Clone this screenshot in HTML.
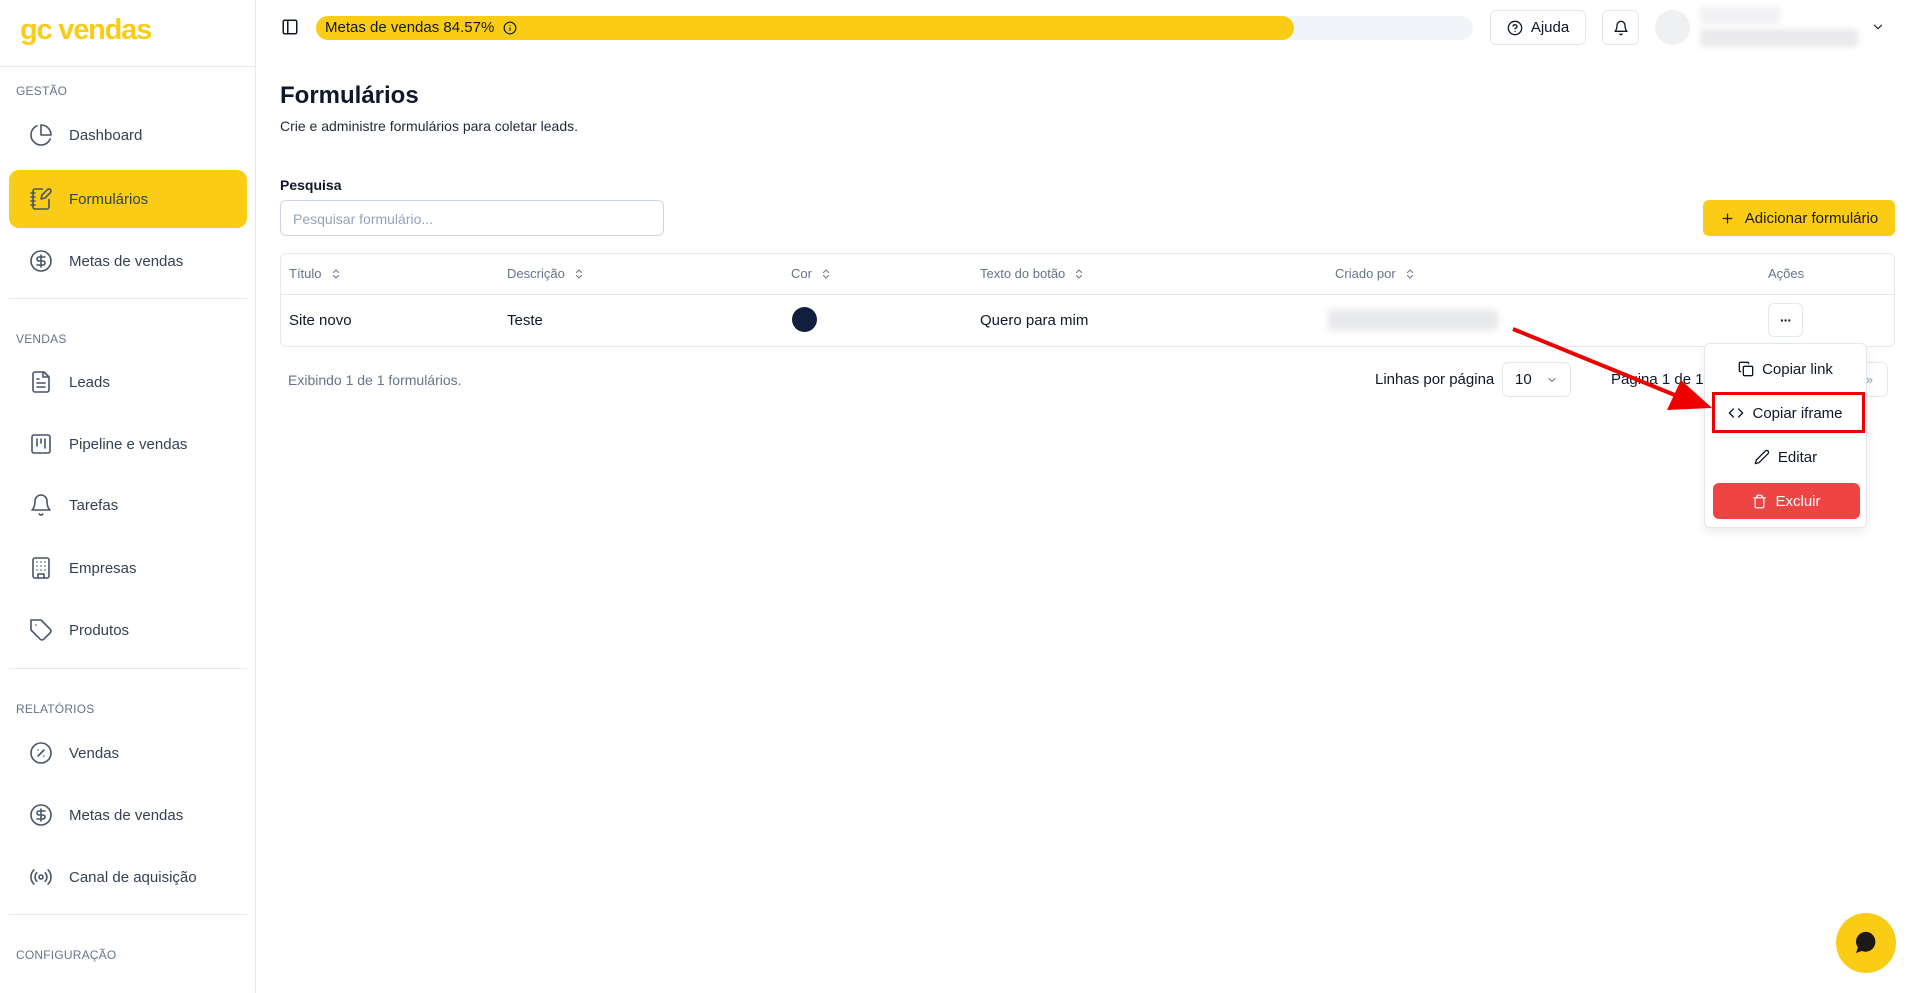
<!DOCTYPE html>
<html><head><meta charset="utf-8"><style>
*{box-sizing:border-box;margin:0;padding:0}
body{width:1920px;height:993px;overflow:hidden;background:#fff;font-family:"Liberation Sans",Arial,sans-serif;color:#0f172a;position:relative}
.a{position:absolute}
.side{left:0;top:0;width:256px;height:993px;border-right:1px solid #e5e7eb}
.sec{position:absolute;left:16px;font-size:12px;color:#64748b;letter-spacing:.2px}
.nav{position:absolute;left:9px;width:238px;height:58px;border-radius:10px;display:flex;align-items:center;font-size:15px;color:#334155}
.nav svg{position:absolute;left:20px;width:24px;height:24px;fill:none;stroke:#475569;stroke-width:1.6;stroke-linecap:round;stroke-linejoin:round}
.nav span{position:absolute;left:60px}
.sep{position:absolute;left:9px;width:238px;height:1px;background:#e5e7eb}
.btn{border:1px solid #e2e8f0;border-radius:6px;background:#fff;display:flex;align-items:center;justify-content:center}
.th{position:absolute;top:266px;font-size:13px;color:#64748b;display:flex;align-items:center;gap:8px}
.td{position:absolute;top:312px;font-size:15px;color:#0f172a}
.mi{position:absolute;left:1704px;width:163px;display:flex;justify-content:center;align-items:center;gap:8px;font-size:15px;color:#0f172a}
svg.i{fill:none;stroke:currentColor;stroke-width:2;stroke-linecap:round;stroke-linejoin:round}
</style></head><body>
<div class="a side">
 <div class="a" style="left:20px;top:14px;font-size:29px;font-weight:bold;color:#facc15;letter-spacing:-1.2px">gc vendas</div>
 <div class="a" style="left:0;top:66px;width:255px;height:1px;background:#e5e7eb"></div>
 <div class="sec" style="top:84px">GESTÃO</div>
 <div class="nav" style="top:106px"><svg viewBox="0 0 24 24"><path d="M21.2 15.9A10 10 0 1 1 8 2.8"/><path d="M22 12A10 10 0 0 0 12 2v10z"/></svg><span>Dashboard</span></div>
 <div class="nav" style="top:170px;background:#facc15"><svg viewBox="0 0 24 24"><path d="M13.4 2H6a2 2 0 0 0-2 2v16a2 2 0 0 0 2 2h12a2 2 0 0 0 2-2v-7.4"/><path d="M2 6h4M2 10h4M2 14h4M2 18h4"/><path d="M21.4 5.6a2.1 2.1 0 0 0-3-3L13 8l-1 4 4-1z"/></svg><span>Formulários</span></div>
 <div class="nav" style="top:232px"><svg viewBox="0 0 24 24"><circle cx="12" cy="12" r="10"/><path d="M16 8h-6a2 2 0 1 0 0 4h4a2 2 0 1 1 0 4H8M12 18V6"/></svg><span>Metas de vendas</span></div>
 <div class="sep" style="top:298px"></div>
 <div class="sec" style="top:332px">VENDAS</div>
 <div class="nav" style="top:353px"><svg viewBox="0 0 24 24"><path d="M15 2H6a2 2 0 0 0-2 2v16a2 2 0 0 0 2 2h12a2 2 0 0 0 2-2V7z"/><path d="M14 2v5h5M16 13H8M16 17H8M10 9H8"/></svg><span>Leads</span></div>
 <div class="nav" style="top:415px"><svg viewBox="0 0 24 24"><rect x="3" y="3" width="18" height="18" rx="2"/><path d="M8 7v7M12 7v4M16 7v9"/></svg><span>Pipeline e vendas</span></div>
 <div class="nav" style="top:476px"><svg viewBox="0 0 24 24"><path d="M6 8a6 6 0 0 1 12 0c0 7 3 9 3 9H3s3-2 3-9"/><path d="M10.3 21a1.9 1.9 0 0 0 3.4 0"/></svg><span>Tarefas</span></div>
 <div class="nav" style="top:539px"><svg viewBox="0 0 24 24"><rect x="4" y="2" width="16" height="20" rx="2"/><path d="M9 22v-4h6v4M8 6h.01M16 6h.01M12 6h.01M12 10h.01M12 14h.01M16 10h.01M16 14h.01M8 10h.01M8 14h.01"/></svg><span>Empresas</span></div>
 <div class="nav" style="top:601px"><svg viewBox="0 0 24 24"><path d="M12 2H2v10l9.3 9.3c.9.9 2.5.9 3.4 0l6.6-6.6c.9-.9.9-2.5 0-3.4z"/><path d="M7 7h.01"/></svg><span>Produtos</span></div>
 <div class="sep" style="top:668px"></div>
 <div class="sec" style="top:702px">RELATÓRIOS</div>
 <div class="nav" style="top:724px"><svg viewBox="0 0 24 24"><circle cx="12" cy="12" r="10"/><path d="M15 9l-6 6M9 9h.01M15 15h.01"/></svg><span>Vendas</span></div>
 <div class="nav" style="top:786px"><svg viewBox="0 0 24 24"><circle cx="12" cy="12" r="10"/><path d="M16 8h-6a2 2 0 1 0 0 4h4a2 2 0 1 1 0 4H8M12 18V6"/></svg><span>Metas de vendas</span></div>
 <div class="nav" style="top:848px"><svg viewBox="0 0 24 24"><path d="M4.9 19.1C1 15.2 1 8.8 4.9 4.9M7.8 16.2c-2.3-2.3-2.3-6.1 0-8.5M16.2 7.8c2.3 2.3 2.3 6.1 0 8.5M19.1 4.9C23 8.8 23 15.1 19.1 19"/><circle cx="12" cy="12" r="2"/></svg><span>Canal de aquisição</span></div>
 <div class="sep" style="top:914px"></div>
 <div class="sec" style="top:948px">CONFIGURAÇÃO</div>
</div>

<svg class="a i" style="left:281px;top:18px;color:#0f172a" width="18" height="18" viewBox="0 0 24 24"><rect x="3" y="3" width="18" height="18" rx="2"/><path d="M9 3v18"/></svg>
<div class="a" style="left:316px;top:16px;width:1157px;height:24px;border-radius:12px;background:#f1f5f9"></div>
<div class="a" style="left:316px;top:16px;width:978px;height:24px;border-radius:12px;background:#facc15"></div>
<div class="a" style="left:325px;top:19px;font-size:15px;color:#0f172a">Metas de vendas 84.57%</div>
<svg class="a i" style="left:503px;top:21px" width="14" height="14" viewBox="0 0 24 24"><circle cx="12" cy="12" r="10"/><path d="M12 16v-4M12 8h.01"/></svg>
<div class="a btn" style="left:1490px;top:10px;width:96px;height:35px;gap:8px;font-size:15px"><svg class="i" width="16" height="16" viewBox="0 0 24 24"><circle cx="12" cy="12" r="10"/><path d="M9.1 9a3 3 0 0 1 5.8 1c0 2-3 3-3 3M12 17h.01"/></svg>Ajuda</div>
<div class="a btn" style="left:1602px;top:10px;width:37px;height:35px"><svg class="i" width="16" height="16" viewBox="0 0 24 24"><path d="M6 8a6 6 0 0 1 12 0c0 7 3 9 3 9H3s3-2 3-9"/><path d="M10.3 21a1.9 1.9 0 0 0 3.4 0"/></svg></div>
<div class="a" style="left:1655px;top:10px;width:35px;height:35px;border-radius:50%;background:#eef0f2"></div>
<div class="a" style="left:1700px;top:6px;width:80px;height:18px;background:#f1f2f4;filter:blur(3px)"></div>
<div class="a" style="left:1700px;top:29px;width:158px;height:18px;background:#e9eaec;filter:blur(3px)"></div>
<svg class="a i" style="left:1871px;top:20px" width="14" height="14" viewBox="0 0 24 24"><path d="M6 9l6 6 6-6"/></svg>

<div class="a" style="left:280px;top:82px;font-size:24px;font-weight:bold">Formulários</div>
<div class="a" style="left:280px;top:118px;font-size:14px;color:#1e293b">Crie e administre formulários para coletar leads.</div>
<div class="a" style="left:280px;top:177px;font-size:14px;font-weight:bold">Pesquisa</div>
<div class="a" style="left:280px;top:200px;width:384px;height:36px;border:1px solid #cbd5e1;border-radius:6px;padding:10px 12px;font-size:14px;color:#94a3b8">Pesquisar formulário...</div>
<div class="a" style="left:1703px;top:200px;width:192px;height:36px;background:#facc15;border-radius:6px;display:flex;align-items:center;justify-content:center;gap:10px;font-size:15px;color:#1c1917"><svg class="i" width="15" height="15" viewBox="0 0 24 24"><path d="M5 12h14M12 5v14"/></svg>Adicionar formulário</div>

<div class="a" style="left:280px;top:253px;width:1615px;height:94px;border:1px solid #e2e8f0;border-radius:6px"></div>
<div class="a" style="left:281px;top:294px;width:1613px;height:1px;background:#e2e8f0"></div>
<div class="th" style="left:289px">Título <svg class="i" width="12" height="14" viewBox="0 0 24 24"><path d="M7 15l5 5 5-5M7 9l5-5 5 5"/></svg></div>
<div class="th" style="left:507px">Descrição <svg class="i" width="12" height="14" viewBox="0 0 24 24"><path d="M7 15l5 5 5-5M7 9l5-5 5 5"/></svg></div>
<div class="th" style="left:791px">Cor <svg class="i" width="12" height="14" viewBox="0 0 24 24"><path d="M7 15l5 5 5-5M7 9l5-5 5 5"/></svg></div>
<div class="th" style="left:980px">Texto do botão <svg class="i" width="12" height="14" viewBox="0 0 24 24"><path d="M7 15l5 5 5-5M7 9l5-5 5 5"/></svg></div>
<div class="th" style="left:1335px">Criado por <svg class="i" width="12" height="14" viewBox="0 0 24 24"><path d="M7 15l5 5 5-5M7 9l5-5 5 5"/></svg></div>
<div class="th" style="left:1768px">Ações</div>
<div class="td" style="left:289px">Site novo</div>
<div class="td" style="left:507px">Teste</div>
<div class="a" style="left:792px;top:307px;width:25px;height:25px;border-radius:50%;background:#0f1f3d"></div>
<div class="td" style="left:980px">Quero para mim</div>
<div class="a" style="left:1328px;top:310px;width:170px;height:20px;background:#e6e7e9;filter:blur(4px)"></div>
<div class="a btn" style="left:1768px;top:303px;width:35px;height:34px;font-size:14px;font-weight:bold;letter-spacing:-1px">···</div>

<div class="a" style="left:288px;top:372px;font-size:14px;color:#64748b">Exibindo 1 de 1 formulários.</div>
<div class="a" style="left:1375px;top:371px;font-size:15px">Linhas por página</div>
<div class="a btn" style="left:1502px;top:362px;width:69px;height:35px;justify-content:space-between;padding:0 12px;font-size:15px">10<svg class="i" width="12" height="12" viewBox="0 0 24 24" style="color:#64748b"><path d="M6 9l6 6 6-6"/></svg></div>
<div class="a" style="left:1611px;top:371px;font-size:15px">Página 1 de 1</div>
<div class="a btn" style="left:1832px;top:362px;width:56px;height:35px;justify-content:flex-end;padding-right:14px;font-size:13px;color:#94a3b8">»</div>

<div class="a" style="left:1704px;top:343px;width:163px;height:185px;background:#fff;border:1px solid #e2e8f0;border-radius:6px;box-shadow:0 4px 10px rgba(0,0,0,.08)"></div>
<div class="mi" style="top:358px;height:22px"><svg class="i" width="16" height="16" viewBox="0 0 24 24"><rect x="8" y="8" width="14" height="14" rx="2"/><path d="M4 16c-1.1 0-2-.9-2-2V4c0-1.1.9-2 2-2h10c1.1 0 2 .9 2 2"/></svg>Copiar link</div>
<div class="a" style="left:1712px;top:392px;width:153px;height:41px;border:3px solid #ee0000"></div>
<div class="mi" style="top:402px;height:22px"><svg class="i" width="16" height="16" viewBox="0 0 24 24"><path d="M16 18l6-6-6-6M8 6l-6 6 6 6"/></svg>Copiar iframe</div>
<div class="mi" style="top:446px;height:22px"><svg class="i" width="16" height="16" viewBox="0 0 24 24"><path d="M17 3a2.8 2.8 0 1 1 4 4L7.5 20.5 2 22l1.5-5.5z"/></svg>Editar</div>
<div class="a" style="left:1713px;top:483px;width:147px;height:36px;background:#ef4444;border-radius:6px;display:flex;align-items:center;justify-content:center;gap:8px;color:#fff;font-size:15px"><svg class="i" width="15" height="15" viewBox="0 0 24 24"><path d="M3 6h18M19 6v14a2 2 0 0 1-2 2H7a2 2 0 0 1-2-2V6M8 6V4a2 2 0 0 1 2-2h4a2 2 0 0 1 2 2v2"/></svg>Excluir</div>

<svg class="a" style="left:0;top:0" width="1920" height="993"><line x1="1513" y1="329" x2="1682" y2="398" stroke="#ee0000" stroke-width="4"/><polygon points="1712,408 1667,410 1681,380" fill="#ee0000"/></svg>

<div class="a" style="left:1836px;top:913px;width:60px;height:60px;border-radius:50%;background:#facc15"></div>
<svg class="a" style="left:1851px;top:928px" width="30" height="30" viewBox="0 0 24 24"><path d="M12 3a8 8 0 0 0-6.5 12.7L4 20l4.5-1.6A8 8 0 1 0 12 3z" fill="#1c1917"/></svg>
</body></html>
